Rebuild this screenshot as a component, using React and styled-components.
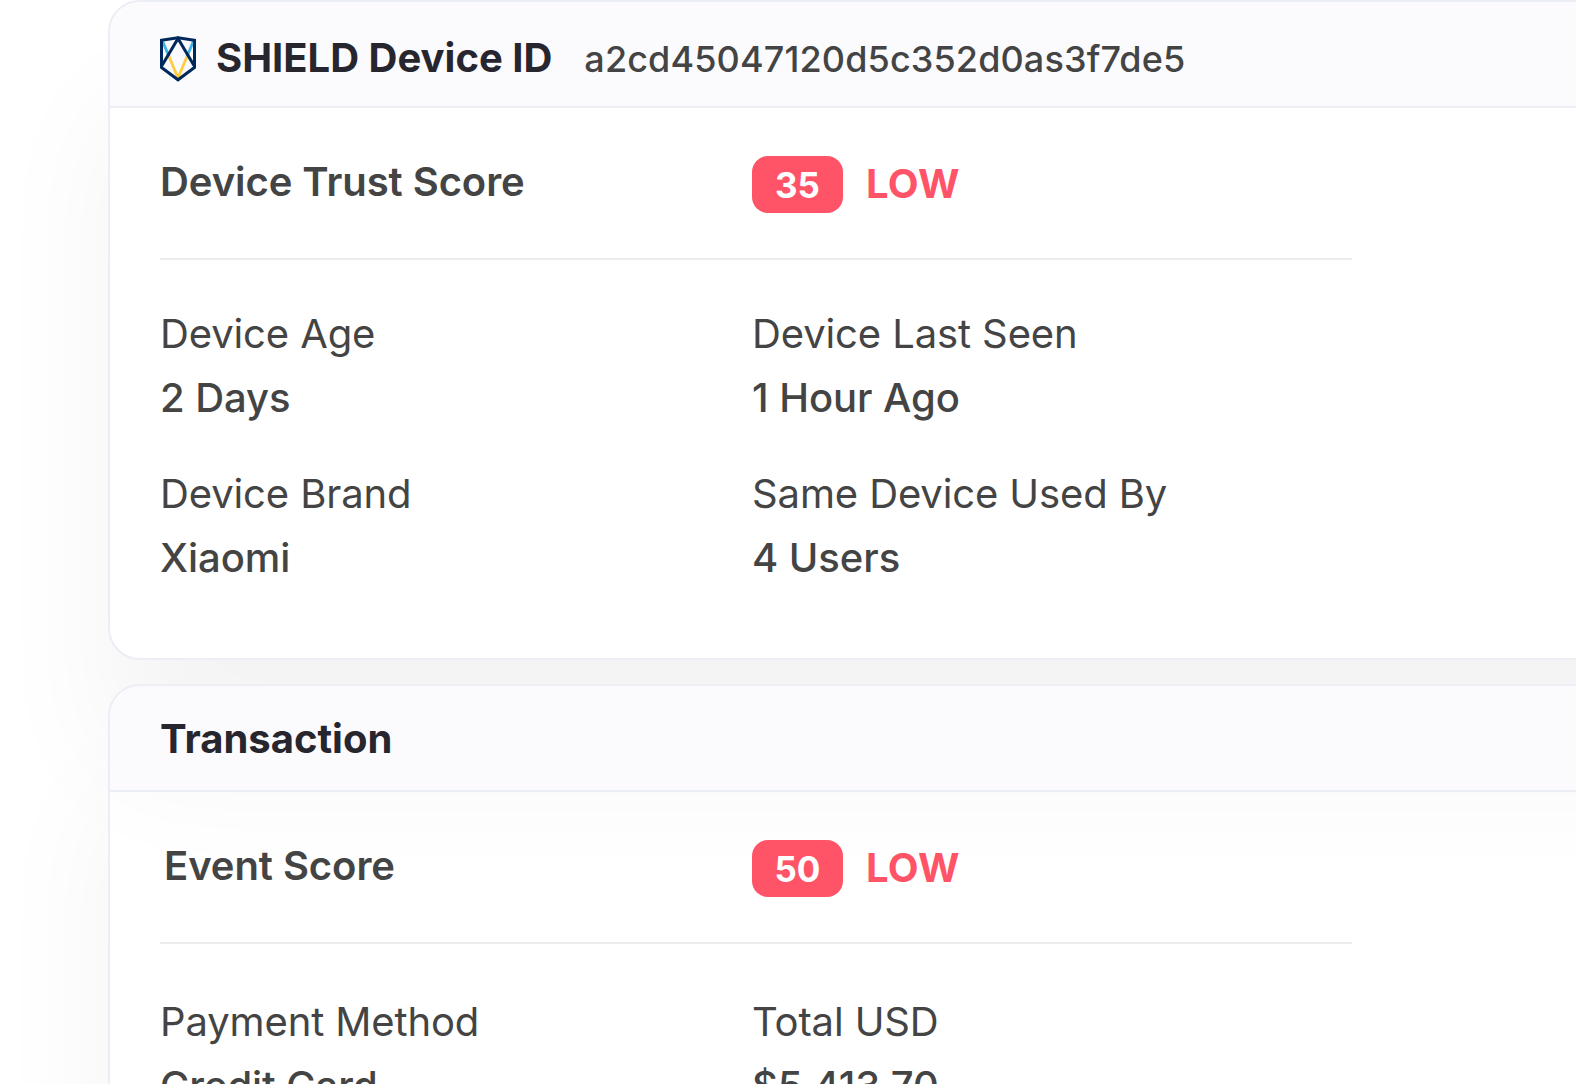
import React from "react";
import styled, { createGlobalStyle } from "styled-components";

const deviceDetails = [
  { label: "Device Age", value: "2 Days" },
  { label: "Device Last Seen", value: "1 Hour Ago" },
  { label: "Device Brand", value: "Xiaomi" },
  { label: "Same Device Used By", value: "4 Users" },
];

const transactionDetails = [
  { label: "Payment Method", value: "Credit Card" },
  { label: "Total USD", value: "$5,413.70" },
];

const ShieldLogo = () => (
  <Logo viewBox="0 0 36 46" fill="none">
    <path d="M2.5 5 L9 20.5 M33.5 5 L27 20.5" stroke="#3db5ea" strokeWidth="2.8" />
    <path d="M9 20.5 L18 42 L27 20.5" stroke="#ffcd3f" strokeWidth="2.8" />
    <path
      d="M1.5 4.3 L18 1.7 L34.5 4.3 V31.5 L18 43.8 L1.5 31.5 Z"
      stroke="#00295b"
      strokeWidth="3"
    />
    <path d="M2 29.5 L18 2.5 L34 29.5" stroke="#00295b" strokeWidth="3" />
  </Logo>
);

const Score = ({ title, score, level, indent }) => (
  <ScoreRow>
    <ScoreTitle $indent={indent}>{title}</ScoreTitle>
    <Badge>{score}</Badge>
    <Level>{level}</Level>
  </ScoreRow>
);

const Details = ({ items, top }) => (
  <DetailsGrid $top={top}>
    {items.map((item) => (
      <div key={item.label}>
        <Label>{item.label}</Label>
        <Value>{item.value}</Value>
      </div>
    ))}
  </DetailsGrid>
);

const App = () => {
  return (
    <Page>
      <GlobalStyle />
      <Card $height={660} $filled>
        <Header>
          <ShieldLogo />
          <Title>SHIELD Device ID</Title>
          <DeviceId>a2cd45047120d5c352d0as3f7de5</DeviceId>
        </Header>
        <Score title="Device Trust Score" score="35" level="LOW" />
        <Details items={deviceDetails} top={42} />
      </Card>
      <Card $height={900}>
        <Header $tight>
          <Title>Transaction</Title>
        </Header>
        <Score title="Event Score" score="50" level="LOW" indent={4} />
        <Details items={transactionDetails} top={46} />
      </Card>
    </Page>
  );
};

const GlobalStyle = createGlobalStyle`
  * {
    box-sizing: border-box;
  }
  body {
    margin: 0;
    background: #fff;
    font-family: Inter, "Liberation Sans", sans-serif;
    color: #444;
  }
`;

const Page = styled.main`
  display: flex;
  flex-direction: column;
  gap: 24px;
  width: 100vw;
  height: 100vh;
  padding-left: 108px;
  overflow: hidden;
`;

const Card = styled.section`
  flex: none;
  width: 1800px;
  height: ${({ $height }) => $height}px;
  border: 2px solid #ebeef5;
  border-radius: 32px;
  background: ${({ $filled }) => ($filled ? "#fff" : "transparent")};
  box-shadow: 0 108px 130px rgba(0, 0, 0, 0.047);
`;

/* sits above the shadow that the card before it throws */
const Header = styled.header`
  position: relative;
  display: flex;
  align-items: center;
  height: 106px;
  padding: ${({ $tight }) => ($tight ? "2px" : "8px")} 50px 0;
  border-bottom: 2px solid #ebeef5;
  border-radius: 30px 30px 0 0;
  background: #fbfbfe;
`;

const Logo = styled.svg`
  width: 36px;
  height: 46px;
  margin: 2px 20px 0 0;
`;

const Title = styled.h2`
  margin: 0;
  font-size: 40px;
  font-weight: 700;
  line-height: 48px;
  color: #27262e;
`;

const DeviceId = styled.span`
  margin: 2px 0 0 32px;
  font-size: 36px;
  font-weight: 500;
  line-height: 44px;
  letter-spacing: 0.12px;
`;

const ScoreRow = styled.div`
  display: flex;
  align-items: center;
  width: 1192px;
  height: 152px;
  margin-left: 50px;
  padding-top: 2px;
  border-bottom: 2px solid #ececec;
`;

const ScoreTitle = styled.h3`
  width: 592px;
  margin: 0 0 4px;
  padding-left: ${({ $indent }) => $indent || 0}px;
  font-size: 40px;
  font-weight: 600;
  line-height: 48px;
  letter-spacing: -0.06px;
`;

const Badge = styled.span`
  width: 91px;
  height: 57px;
  border-radius: 16px;
  background: #ff5468;
  color: #fff;
  font-size: 35px;
  font-weight: 700;
  line-height: 58px;
  text-align: center;
`;

const Level = styled.span`
  margin-left: 23px;
  font-size: 40px;
  font-weight: 700;
  line-height: 48px;
  letter-spacing: 0.3px;
  color: #ff5468;
`;

const DetailsGrid = styled.div`
  display: grid;
  grid-template-columns: 592px 600px;
  row-gap: 32px;
  margin-left: 50px;
  padding-top: ${({ $top }) => $top}px;
`;

const Label = styled.div`
  font-size: 40px;
  font-weight: 400;
  line-height: 64px;
  letter-spacing: -0.12px;
  white-space: nowrap;
`;

const Value = styled.div`
  font-size: 40px;
  font-weight: 500;
  line-height: 64px;
  letter-spacing: -0.05px;
  white-space: nowrap;
`;

export default App;
